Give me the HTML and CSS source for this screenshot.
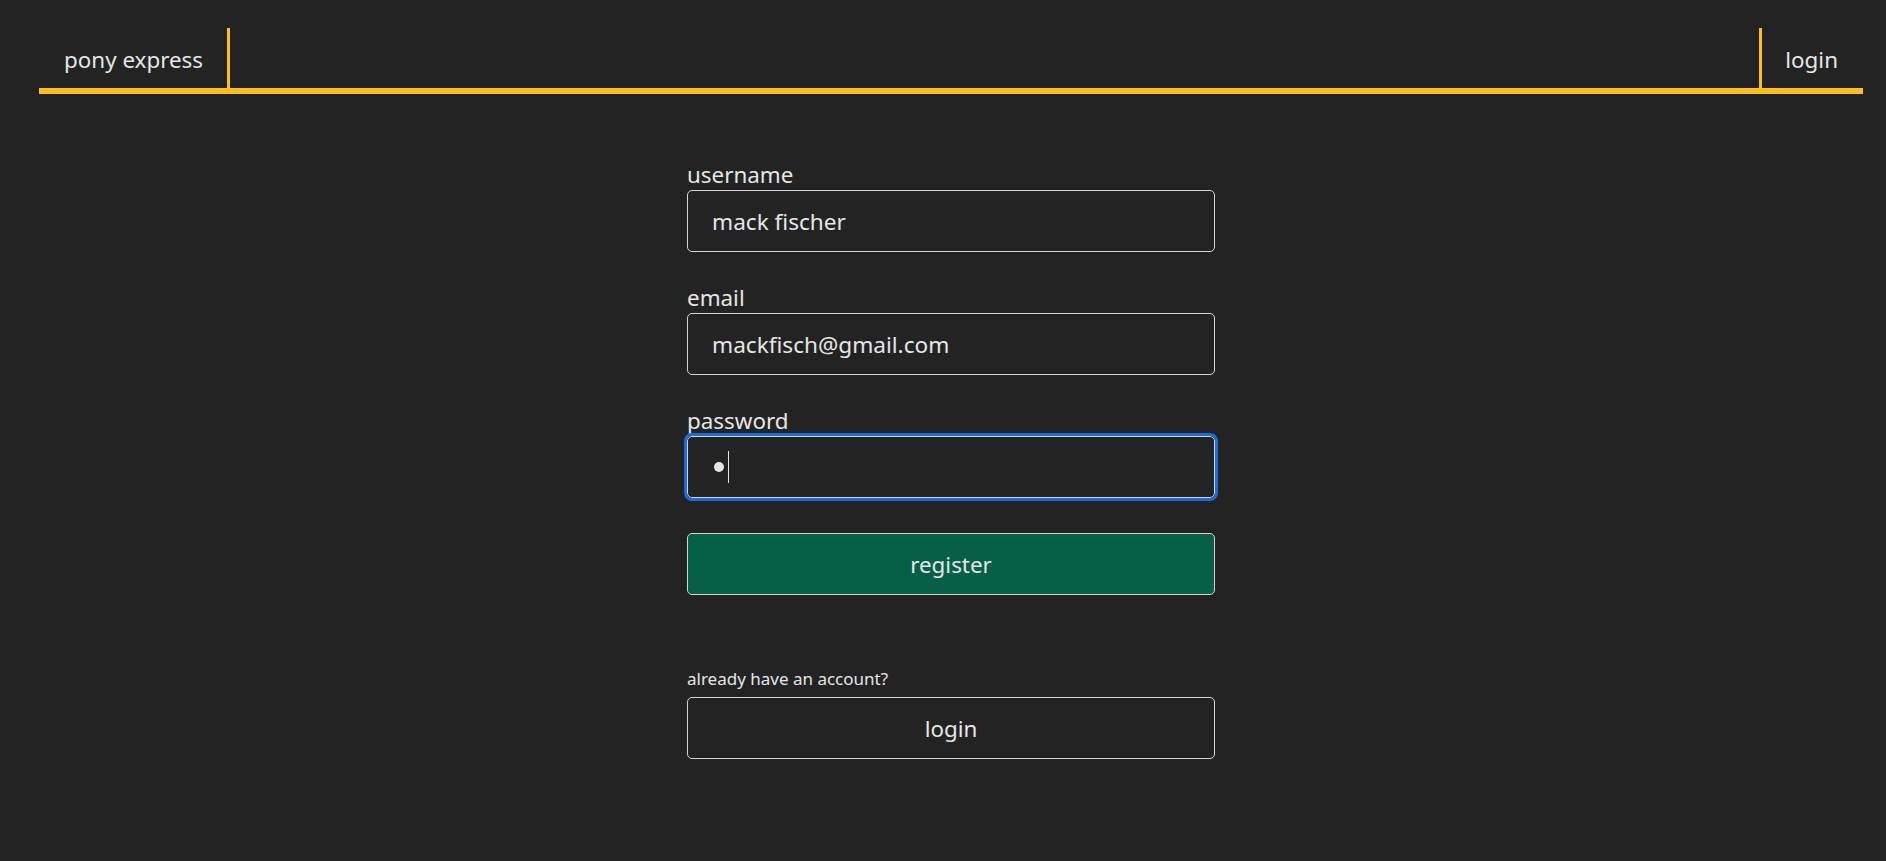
FILE: index.html
```html
<!DOCTYPE html>
<html lang="en">
<head>
<meta charset="utf-8">
<title>pony express - register</title>
<link rel="stylesheet" href="styles.css">
</head>
<body>
<nav class="nav">
  <a class="nav-brand" href="#">pony express</a>
  <a class="nav-link" href="#">login</a>
</nav>
<main class="page">
  <form class="form">
    <label class="field-label" for="username">username</label>
    <input class="field-input" id="username" type="text" value="mack fischer">
    <label class="field-label" for="email">email</label>
    <input class="field-input" id="email" type="text" value="mackfisch@gmail.com">
    <label class="field-label">password</label>
    <div class="field-input is-focused"><span class="pw-dot"></span><span class="caret"></span></div>
    <button type="button" class="btn btn-primary">register</button>
    <p class="hint">already have an account?</p>
    <button type="button" class="btn btn-outline">login</button>
  </form>
</main>
</body>
</html>
```
FILE: styles.css
```css
html, body {
  margin: 0;
  padding: 0;
  background: #232323;
  color: #e6e6e6;
  font-family: "Noto Sans", "Open Sans", sans-serif;
}

.nav {
  display: flex;
  justify-content: space-between;
  align-items: stretch;
  margin: 28px 23px 0 39px;
  border-bottom: 6px solid #fbbf24;
}

.nav-brand,
.nav-link {
  display: block;
  box-sizing: border-box;
  color: #e6e6e6;
  text-decoration: none;
  font-size: 22.4px;
  line-height: 56px;
  height: 60px;
  padding-top: 4px;
}

.nav-brand {
  padding-left: 25px;
  padding-right: 24px;
  border-right: 3px solid #fbbf24;
}

.nav-link {
  padding-left: 23px;
  padding-right: 25px;
  border-left: 3px solid #fbbf24;
}

.page {
  display: flex;
  justify-content: center;
  margin: 0 23px 0 39px;
  padding-top: 63px;
}

.form {
  width: 528px;
  display: flex;
  flex-direction: column;
}

.field-label {
  display: block;
  font-size: 22.4px;
  line-height: 29px;
  padding-top: 3px;
  margin-bottom: 1px;
}

.field-input {
  box-sizing: border-box;
  height: 62px;
  width: 100%;
  margin: 0 0 28px 0;
  padding: 0 24px;
  background: #232323;
  color: #e6e6e6;
  border: 1px solid #d6d6d6;
  border-radius: 5px;
  font-family: inherit;
  font-size: 22.6px;
  outline: none;
}

.is-focused {
  display: flex;
  align-items: center;
  margin-bottom: 35px;
  outline: 3px solid #1a6ae0;
  outline-offset: 0;
}

.pw-dot {
  display: inline-block;
  width: 10px;
  height: 10px;
  border-radius: 50%;
  background: #e6e6e6;
  margin-left: 2px;
}

.caret {
  display: inline-block;
  width: 1px;
  height: 32px;
  background: #e6e6e6;
  margin-left: 4px;
}

.btn {
  box-sizing: border-box;
  height: 62px;
  width: 100%;
  border: 1px solid #d6d6d6;
  border-radius: 5px;
  color: #e6e6e6;
  font-family: inherit;
  font-size: 22.4px;
  cursor: pointer;
}

.btn-primary {
  background: #065f46;
}

.btn-outline {
  background: transparent;
}

.hint {
  margin: 72px 0 6px 0;
  font-size: 17px;
  line-height: 24px;
}
```
